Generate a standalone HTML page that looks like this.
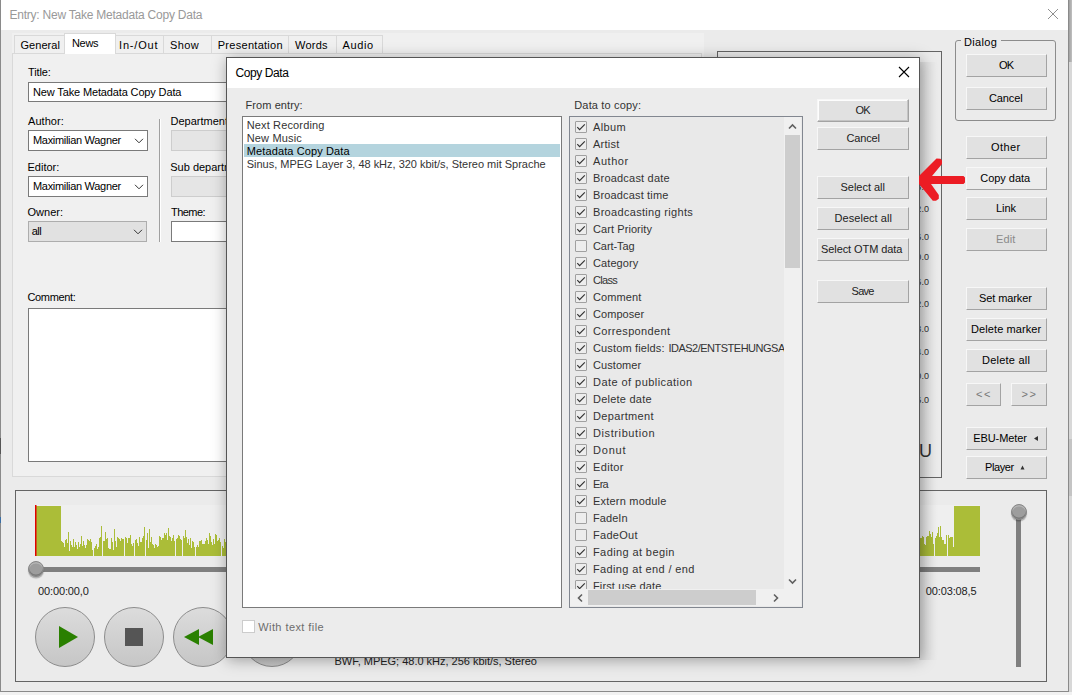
<!DOCTYPE html><html><head><meta charset="utf-8"><style>
html,body{margin:0;padding:0;}
body{width:1072px;height:695px;overflow:hidden;position:relative;background:#f4f4f4;font-family:"Liberation Sans", sans-serif;}
.a{position:absolute;}
.t{position:absolute;white-space:nowrap;line-height:1;font-family:"Liberation Sans", sans-serif;}
</style></head><body>
<div class="a" style="left:1069px;top:0px;width:3px;height:695px;background:#d8d8d8"></div>
<div class="a" style="left:1069px;top:0px;width:3px;height:62px;background:linear-gradient(90deg,#a0a0a0,#c0c0c0)"></div>
<div class="a" style="left:1069px;top:439px;width:3px;height:57px;background:#c4c4c4"></div>
<div class="a" style="left:0px;top:692px;width:1072px;height:3px;background:#f2f2f2"></div>
<div class="a" style="left:0px;top:0px;width:1069px;height:692px;background:#ebebeb;border:1px solid #8a8a8a;border-top:none;box-sizing:border-box"></div>
<div class="a" style="left:1px;top:0px;width:1067px;height:30px;background:#fff"></div>
<div class="a" style="left:0px;top:438px;width:1px;height:16px;background:#555"></div>
<div class="a" style="left:0px;top:517px;width:1px;height:6px;background:#3a6ea5"></div>
<div class="t" style="left:9.50px;top:8.84px;font-size:12px;color:#999;letter-spacing:-0.230px;">Entry: New Take Metadata Copy Data</div>
<svg class="a" style="left:1047px;top:8px" width="12" height="12"><path d="M1 1L11 11M11 1L1 11" stroke="#8f8f8f" stroke-width="1" fill="none"/></svg>
<div class="a" style="left:12px;top:33px;width:692px;height:443px;background:#f0f0f0"></div>
<div class="a" style="left:12px;top:53px;width:690px;height:424px;background:#f0f0f0;border:1px solid #d9d9d9;box-sizing:border-box"></div>
<div class="a" style="left:14px;top:35px;width:51px;height:19px;background:#f0f0f0;border:1px solid #d9d9d9;box-sizing:border-box"></div>
<div class="t" style="left:20.50px;top:39.69px;font-size:11px;color:#000;letter-spacing:0.052px;">General</div>
<div class="a" style="left:64px;top:33px;width:52px;height:21px;background:#fff;border:1px solid #d9d9d9;border-bottom:none;box-sizing:border-box"></div>
<div class="t" style="left:72.00px;top:38.19px;font-size:11px;color:#000;letter-spacing:-0.335px;">News</div>
<div class="a" style="left:115px;top:35px;width:49px;height:19px;background:#f0f0f0;border:1px solid #d9d9d9;box-sizing:border-box"></div>
<div class="t" style="left:119.00px;top:39.69px;font-size:11px;color:#000;letter-spacing:0.822px;">In-/Out</div>
<div class="a" style="left:163px;top:35px;width:49px;height:19px;background:#f0f0f0;border:1px solid #d9d9d9;box-sizing:border-box"></div>
<div class="t" style="left:170.00px;top:39.69px;font-size:11px;color:#000;letter-spacing:0.393px;">Show</div>
<div class="a" style="left:211px;top:35px;width:78px;height:19px;background:#f0f0f0;border:1px solid #d9d9d9;box-sizing:border-box"></div>
<div class="t" style="left:217.75px;top:39.69px;font-size:11px;color:#000;letter-spacing:0.282px;">Presentation</div>
<div class="a" style="left:288px;top:35px;width:49px;height:19px;background:#f0f0f0;border:1px solid #d9d9d9;box-sizing:border-box"></div>
<div class="t" style="left:295.00px;top:39.69px;font-size:11px;color:#000;letter-spacing:0.229px;">Words</div>
<div class="a" style="left:336px;top:35px;width:47px;height:19px;background:#f0f0f0;border:1px solid #d9d9d9;box-sizing:border-box"></div>
<div class="t" style="left:342.50px;top:39.69px;font-size:11px;color:#000;letter-spacing:0.621px;">Audio</div>
<div class="t" style="left:28.00px;top:66.69px;font-size:11px;color:#000;letter-spacing:-0.125px;">Title:</div>
<div class="a" style="left:28px;top:82px;width:400px;height:20px;background:#fff;border:1px solid #7a7a7a;box-sizing:border-box"></div>
<div class="t" style="left:33.00px;top:86.94px;font-size:11px;color:#000;letter-spacing:-0.139px;">New Take Metadata Copy Data</div>
<div class="t" style="left:28.00px;top:115.69px;font-size:11px;color:#000;letter-spacing:0.057px;">Author:</div>
<div class="a" style="left:28px;top:130px;width:120px;height:21px;background:#fff;border:1px solid #7a7a7a;box-sizing:border-box"></div>
<div class="t" style="left:33.00px;top:134.69px;font-size:11px;color:#000;letter-spacing:-0.310px;">Maximilian Wagner</div>
<svg class="a" style="left:134px;top:138px" width="10" height="6"><path d="M1 0.8L5 4.8L9 0.8" stroke="#333" stroke-width="1" fill="none"/></svg>
<div class="t" style="left:27.50px;top:161.69px;font-size:11px;color:#000;letter-spacing:0.002px;">Editor:</div>
<div class="a" style="left:28px;top:176px;width:120px;height:21px;background:#fff;border:1px solid #7a7a7a;box-sizing:border-box"></div>
<div class="t" style="left:33.00px;top:180.69px;font-size:11px;color:#000;letter-spacing:-0.310px;">Maximilian Wagner</div>
<svg class="a" style="left:134px;top:184px" width="10" height="6"><path d="M1 0.8L5 4.8L9 0.8" stroke="#333" stroke-width="1" fill="none"/></svg>
<div class="t" style="left:27.50px;top:206.69px;font-size:11px;color:#000;letter-spacing:0.020px;">Owner:</div>
<div class="a" style="left:28px;top:221px;width:119px;height:21px;background:#e1e1e1;border:1px solid #adadad;box-sizing:border-box"></div>
<div class="t" style="left:31.75px;top:225.69px;font-size:11px;color:#000;letter-spacing:-0.531px;">all</div>
<svg class="a" style="left:133px;top:229px" width="10" height="6"><path d="M1 0.8L5 4.8L9 0.8" stroke="#333" stroke-width="1" fill="none"/></svg>
<div class="a" style="left:159px;top:119px;width:1px;height:123px;background:#a0a0a0"></div>
<div class="a" style="left:160px;top:119px;width:1px;height:123px;background:#fff"></div>
<div class="t" style="left:170.50px;top:115.69px;font-size:11px;color:#000;">Department</div>
<div class="a" style="left:171px;top:130px;width:200px;height:21px;background:#e5e5e5;border:1px solid #cdcdcd;box-sizing:border-box"></div>
<div class="t" style="left:170.25px;top:161.69px;font-size:11px;color:#000;">Sub department</div>
<div class="a" style="left:171px;top:176px;width:200px;height:21px;background:#e5e5e5;border:1px solid #cdcdcd;box-sizing:border-box"></div>
<div class="t" style="left:171.00px;top:206.69px;font-size:11px;color:#000;letter-spacing:-0.547px;">Theme:</div>
<div class="a" style="left:171px;top:221px;width:200px;height:21px;background:#fff;border:1px solid #7a7a7a;box-sizing:border-box"></div>
<div class="t" style="left:27.50px;top:292.29px;font-size:11px;color:#000;letter-spacing:-0.347px;">Comment:</div>
<div class="a" style="left:28px;top:308px;width:400px;height:154px;background:#fff;border:1px solid #7a7a7a;box-sizing:border-box"></div>
<div class="a" style="left:717px;top:51px;width:225px;height:427px;background:#ebebeb;border:1px solid #646464;box-sizing:border-box"></div>
<div class="t" style="left:916.30px;top:182.78px;font-size:9px;color:#333;">8</div>
<div class="t" style="left:921.50px;top:182.78px;font-size:9px;color:#333;">.</div>
<div class="t" style="left:923.90px;top:182.78px;font-size:9px;color:#333;">0</div>
<div class="t" style="left:916.30px;top:205.28px;font-size:9px;color:#333;">2</div>
<div class="t" style="left:921.50px;top:205.28px;font-size:9px;color:#333;">.</div>
<div class="t" style="left:923.90px;top:205.28px;font-size:9px;color:#333;">0</div>
<div class="t" style="left:916.30px;top:233.48px;font-size:9px;color:#333;">6</div>
<div class="t" style="left:921.50px;top:233.48px;font-size:9px;color:#333;">.</div>
<div class="t" style="left:923.90px;top:233.48px;font-size:9px;color:#333;">0</div>
<div class="t" style="left:916.30px;top:252.78px;font-size:9px;color:#333;">0</div>
<div class="t" style="left:921.50px;top:252.78px;font-size:9px;color:#333;">.</div>
<div class="t" style="left:923.90px;top:252.78px;font-size:9px;color:#333;">0</div>
<div class="t" style="left:916.30px;top:277.78px;font-size:9px;color:#333;">6</div>
<div class="t" style="left:921.50px;top:277.78px;font-size:9px;color:#333;">.</div>
<div class="t" style="left:923.90px;top:277.78px;font-size:9px;color:#333;">0</div>
<div class="t" style="left:916.30px;top:300.28px;font-size:9px;color:#333;">2</div>
<div class="t" style="left:921.50px;top:300.28px;font-size:9px;color:#333;">.</div>
<div class="t" style="left:923.90px;top:300.28px;font-size:9px;color:#333;">0</div>
<div class="t" style="left:916.30px;top:324.53px;font-size:9px;color:#333;">8</div>
<div class="t" style="left:921.50px;top:324.53px;font-size:9px;color:#333;">.</div>
<div class="t" style="left:923.90px;top:324.53px;font-size:9px;color:#333;">0</div>
<div class="t" style="left:916.30px;top:348.28px;font-size:9px;color:#333;">4</div>
<div class="t" style="left:921.50px;top:348.28px;font-size:9px;color:#333;">.</div>
<div class="t" style="left:923.90px;top:348.28px;font-size:9px;color:#333;">0</div>
<div class="t" style="left:916.30px;top:372.03px;font-size:9px;color:#333;">0</div>
<div class="t" style="left:921.50px;top:372.03px;font-size:9px;color:#333;">.</div>
<div class="t" style="left:923.90px;top:372.03px;font-size:9px;color:#333;">0</div>
<div class="t" style="left:916.30px;top:395.78px;font-size:9px;color:#333;">6</div>
<div class="t" style="left:921.50px;top:395.78px;font-size:9px;color:#333;">.</div>
<div class="t" style="left:923.90px;top:395.78px;font-size:9px;color:#333;">0</div>
<div class="t" style="left:919.00px;top:441.76px;font-size:18px;color:#333;">U</div>
<div class="a" style="left:955px;top:40px;width:101px;height:81px;border:1px solid #8c8c8c;border-radius:3px;box-sizing:border-box"></div>
<div class="a" style="left:961px;top:34px;width:40px;height:12px;background:#ebebeb"></div>
<div class="t" style="left:964.00px;top:36.94px;font-size:11px;color:#000;letter-spacing:0.337px;">Dialog</div>
<div class="a" style="left:966px;top:54px;width:81px;height:23px;background:#e1e1e1;border-top:1px solid #f7f7f7;border-left:1px solid #f7f7f7;border-bottom:1px solid #a3a3a3;border-right:1px solid #a3a3a3;box-sizing:border-box"></div>
<div class="t" style="left:999.00px;top:60.19px;font-size:11px;color:#000;letter-spacing:-0.700px;">OK</div>
<div class="a" style="left:966px;top:87px;width:81px;height:23px;background:#e1e1e1;border-top:1px solid #f7f7f7;border-left:1px solid #f7f7f7;border-bottom:1px solid #a3a3a3;border-right:1px solid #a3a3a3;box-sizing:border-box"></div>
<div class="t" style="left:989.00px;top:93.19px;font-size:11px;color:#000;letter-spacing:-0.109px;">Cancel</div>
<div class="a" style="left:966px;top:136px;width:81px;height:23px;background:#e1e1e1;border-top:1px solid #f7f7f7;border-left:1px solid #f7f7f7;border-bottom:1px solid #a3a3a3;border-right:1px solid #a3a3a3;box-sizing:border-box"></div>
<div class="t" style="left:991.00px;top:142.19px;font-size:11px;color:#000;letter-spacing:0.413px;">Other</div>
<div class="a" style="left:966px;top:167px;width:81px;height:23px;background:#ececec;border-top:1px solid #f7f7f7;border-left:1px solid #f7f7f7;border-bottom:1px solid #a3a3a3;border-right:1px solid #a3a3a3;box-sizing:border-box"></div>
<div class="t" style="left:980.25px;top:173.19px;font-size:11px;color:#000;letter-spacing:-0.035px;">Copy data</div>
<div class="a" style="left:966px;top:197px;width:81px;height:23px;background:#e1e1e1;border-top:1px solid #f7f7f7;border-left:1px solid #f7f7f7;border-bottom:1px solid #a3a3a3;border-right:1px solid #a3a3a3;box-sizing:border-box"></div>
<div class="t" style="left:996.00px;top:203.19px;font-size:11px;color:#000;letter-spacing:-0.060px;">Link</div>
<div class="a" style="left:966px;top:228px;width:81px;height:23px;background:#e1e1e1;border-top:1px solid #f7f7f7;border-left:1px solid #f7f7f7;border-bottom:1px solid #a3a3a3;border-right:1px solid #a3a3a3;box-sizing:border-box"></div>
<div class="t" style="left:996.00px;top:234.19px;font-size:11px;color:#8a8a8a;letter-spacing:0.117px;">Edit</div>
<div class="a" style="left:966px;top:287px;width:81px;height:23px;background:#e1e1e1;border-top:1px solid #f7f7f7;border-left:1px solid #f7f7f7;border-bottom:1px solid #a3a3a3;border-right:1px solid #a3a3a3;box-sizing:border-box"></div>
<div class="t" style="left:979.00px;top:293.19px;font-size:11px;color:#000;letter-spacing:-0.098px;">Set marker</div>
<div class="a" style="left:966px;top:318px;width:81px;height:23px;background:#e1e1e1;border-top:1px solid #f7f7f7;border-left:1px solid #f7f7f7;border-bottom:1px solid #a3a3a3;border-right:1px solid #a3a3a3;box-sizing:border-box"></div>
<div class="t" style="left:971.00px;top:324.19px;font-size:11px;color:#000;letter-spacing:0.090px;">Delete marker</div>
<div class="a" style="left:966px;top:349px;width:81px;height:23px;background:#e1e1e1;border-top:1px solid #f7f7f7;border-left:1px solid #f7f7f7;border-bottom:1px solid #a3a3a3;border-right:1px solid #a3a3a3;box-sizing:border-box"></div>
<div class="t" style="left:982.00px;top:355.19px;font-size:11px;color:#000;letter-spacing:0.232px;">Delete all</div>
<div class="a" style="left:966px;top:427px;width:81px;height:23px;background:#e1e1e1;border-top:1px solid #f7f7f7;border-left:1px solid #f7f7f7;border-bottom:1px solid #a3a3a3;border-right:1px solid #a3a3a3;box-sizing:border-box"></div>
<div class="t" style="left:973.25px;top:433.19px;font-size:11px;color:#000;letter-spacing:-0.092px;">EBU-Meter</div>
<div class="a" style="left:966px;top:456px;width:81px;height:23px;background:#e1e1e1;border-top:1px solid #f7f7f7;border-left:1px solid #f7f7f7;border-bottom:1px solid #a3a3a3;border-right:1px solid #a3a3a3;box-sizing:border-box"></div>
<div class="t" style="left:985.00px;top:462.19px;font-size:11px;color:#000;letter-spacing:-0.403px;">Player</div>
<svg class="a" style="left:0;top:0" width="1072" height="695"><path d="M1034 438.5L1038 436V441z" fill="#333"/><path d="M1020.5 469.5L1022.5 465.5L1024.5 469.5z" fill="#333"/></svg>
<div class="a" style="left:966px;top:383px;width:35px;height:23px;background:#e1e1e1;border-top:1px solid #f7f7f7;border-left:1px solid #f7f7f7;border-bottom:1px solid #a3a3a3;border-right:1px solid #a3a3a3;box-sizing:border-box"></div>
<div class="t" style="left:976.00px;top:389.19px;font-size:11px;color:#777;letter-spacing:-0.700px;">&lt; &lt;</div>
<div class="a" style="left:1011px;top:383px;width:36px;height:23px;background:#e1e1e1;border-top:1px solid #f7f7f7;border-left:1px solid #f7f7f7;border-bottom:1px solid #a3a3a3;border-right:1px solid #a3a3a3;box-sizing:border-box"></div>
<div class="t" style="left:1021.50px;top:389.19px;font-size:11px;color:#777;letter-spacing:-0.700px;">&gt; &gt;</div>
<div class="a" style="left:15px;top:490px;width:1032px;height:192px;border:1px solid #646464;box-sizing:border-box"></div>
<div class="a" style="left:35px;top:505px;width:945px;height:51px;background:#efefef"></div>
<svg class="a" style="left:0;top:0" width="1072" height="695"><path d="M61 556V541h1V556zM62 556V542h1V556zM63 556V543h1V556zM64 556V547h1V556zM65 556V540h1V556zM66 556V539h1V556zM67 556V543h1V556zM68 556V532h1V556zM69 556V551h1V556zM70 556V541h1V556zM71 556V545h1V556zM72 556V547h1V556zM73 556V539h1V556zM74 556V547h1V556zM75 556V542h1V556zM76 556V545h1V556zM77 556V549h1V556zM78 556V542h1V556zM79 556V547h1V556zM80 556V544h1V556zM81 556V536h1V556zM82 556V546h1V556zM83 556V541h1V556zM84 556V545h1V556zM85 556V548h1V556zM86 556V545h1V556zM87 556V539h1V556zM88 556V540h1V556zM89 556V541h1V556zM90 556V539h1V556zM91 556V542h1V556zM92 556V550h1V556zM94 556V548h1V556zM95 556V546h1V556zM96 556V544h1V556zM97 556V549h1V556zM98 556V547h1V556zM99 556V538h1V556zM100 556V537h1V556zM101 556V526h1V556zM103 556V541h1V556zM104 556V541h1V556zM105 556V532h1V556zM106 556V539h1V556zM107 556V538h1V556zM108 556V548h1V556zM109 556V549h1V556zM110 556V549h1V556zM111 556V538h1V556zM112 556V542h1V556zM113 556V550h1V556zM114 556V529h1V556zM115 556V541h1V556zM116 556V547h1V556zM117 556V537h1V556zM118 556V538h1V556zM119 556V539h1V556zM120 556V541h1V556zM121 556V538h1V556zM122 556V539h1V556zM123 556V539h1V556zM125 556V537h1V556zM126 556V538h1V556zM127 556V543h1V556zM128 556V538h1V556zM129 556V538h1V556zM130 556V535h1V556zM131 556V544h1V556zM132 556V546h1V556zM133 556V543h1V556zM135 556V540h1V556zM136 556V539h1V556zM137 556V543h1V556zM138 556V546h1V556zM139 556V537h1V556zM140 556V542h1V556zM141 556V542h1V556zM142 556V538h1V556zM143 556V536h1V556zM144 556V527h1V556zM146 556V540h1V556zM147 556V533h1V556zM148 556V548h1V556zM149 556V529h1V556zM150 556V542h1V556zM151 556V537h1V556zM152 556V544h1V556zM153 556V545h1V556zM154 556V548h1V556zM155 556V544h1V556zM156 556V545h1V556zM157 556V547h1V556zM158 556V546h1V556zM159 556V536h1V556zM160 556V537h1V556zM161 556V540h1V556zM162 556V538h1V556zM163 556V538h1V556zM164 556V533h1V556zM165 556V535h1V556zM166 556V533h1V556zM167 556V540h1V556zM168 556V528h1V556zM169 556V536h1V556zM170 556V537h1V556zM171 556V541h1V556zM172 556V538h1V556zM173 556V535h1V556zM174 556V541h1V556zM176 556V539h1V556zM177 556V538h1V556zM178 556V535h1V556zM179 556V536h1V556zM180 556V539h1V556zM181 556V540h1V556zM183 556V536h1V556zM184 556V538h1V556zM185 556V530h1V556zM186 556V537h1V556zM187 556V543h1V556zM188 556V539h1V556zM189 556V545h1V556zM190 556V538h1V556zM191 556V548h1V556zM192 556V541h1V556zM193 556V542h1V556zM194 556V547h1V556zM196 556V547h1V556zM197 556V545h1V556zM198 556V547h1V556zM199 556V541h1V556zM200 556V541h1V556zM201 556V540h1V556zM202 556V544h1V556zM203 556V544h1V556zM204 556V544h1V556zM205 556V541h1V556zM206 556V538h1V556zM207 556V540h1V556zM208 556V544h1V556zM209 556V533h1V556zM210 556V536h1V556zM211 556V542h1V556zM212 556V545h1V556zM213 556V539h1V556zM214 556V544h1V556zM215 556V534h1V556zM216 556V535h1V556zM217 556V541h1V556zM218 556V540h1V556zM219 556V538h1V556zM220 556V542h1V556zM222 556V546h1V556zM223 556V548h1V556zM224 556V539h1V556zM225 556V542h1V556zM919 556V536h1V556zM920 556V538h1V556zM921 556V538h1V556zM922 556V536h1V556zM923 556V537h1V556zM924 556V544h1V556zM925 556V545h1V556zM926 556V537h1V556zM927 556V536h1V556zM928 556V536h1V556zM929 556V531h1V556zM930 556V534h1V556zM931 556V537h1V556zM932 556V532h1V556zM933 556V544h1V556zM935 556V538h1V556zM936 556V536h1V556zM937 556V533h1V556zM938 556V527h1V556zM939 556V537h1V556zM940 556V526h1V556zM941 556V537h1V556zM942 556V540h1V556zM943 556V540h1V556zM944 556V544h1V556zM945 556V544h1V556zM946 556V535h1V556zM948 556V535h1V556zM949 556V538h1V556zM950 556V537h1V556zM951 556V537h1V556zM952 556V537h1V556zM953 556V547h1V556z" fill="#abbd38"/><rect x="36" y="506" width="25" height="50" fill="#abbd38"/><rect x="954" y="506" width="26" height="50" fill="#abbd38"/><rect x="35" y="505" width="1.5" height="51" fill="#e00000"/></svg>
<div class="a" style="left:36px;top:567px;width:944px;height:5px;background:#7f7f7f"></div>
<div class="a" style="left:28px;top:560.5px;width:16px;height:16px;border-radius:50%;background:#9d9d9d;border:1px solid #888;box-sizing:border-box;box-shadow:inset 0 -1.5px 0 #7a7a7a, inset 0 1.5px 0 #b5b5b5, 0 1.5px 1px rgba(0,0,0,.25)"></div>
<div class="t" style="left:38.00px;top:586.19px;font-size:11px;color:#222;letter-spacing:-0.125px;">00:00:00,0</div>
<div class="t" style="left:925.75px;top:586.19px;font-size:11px;color:#222;letter-spacing:-0.125px;">00:03:08,5</div>
<div class="a" style="left:1016px;top:512px;width:5px;height:155px;background:#7f7f7f"></div>
<div class="a" style="left:1010.5px;top:504px;width:16px;height:16px;border-radius:50%;background:#9d9d9d;border:1px solid #888;box-sizing:border-box;box-shadow:inset 0 -1.5px 0 #7a7a7a, inset 0 1.5px 0 #b5b5b5, 0 1.5px 1px rgba(0,0,0,.25)"></div>
<div class="a" style="left:34.75px;top:606.5px;width:60px;height:60px;border-radius:50%;background:linear-gradient(#dcdcdc,#c6c6c6);border:1px solid #8c8c8c;box-sizing:border-box"></div>
<div class="a" style="left:104px;top:606.5px;width:60px;height:60px;border-radius:50%;background:linear-gradient(#dcdcdc,#c6c6c6);border:1px solid #8c8c8c;box-sizing:border-box"></div>
<div class="a" style="left:173px;top:606.5px;width:60px;height:60px;border-radius:50%;background:linear-gradient(#dcdcdc,#c6c6c6);border:1px solid #8c8c8c;box-sizing:border-box"></div>
<div class="a" style="left:242px;top:606.5px;width:60px;height:60px;border-radius:50%;background:linear-gradient(#dcdcdc,#c6c6c6);border:1px solid #8c8c8c;box-sizing:border-box"></div>
<svg class="a" style="left:0;top:0" width="1072" height="695"><path d="M59 626L78 637L59 648z" fill="#2a8000"/><rect x="125" y="628" width="18" height="18" fill="#555"/><path d="M184 637L199 629V645z M198 637L213 629V645z" fill="#2a8000"/></svg>
<div class="t" style="left:334.50px;top:655.79px;font-size:11px;color:#222;letter-spacing:-0.014px;">BWF, MPEG; 48.0 kHz, 256 kbit/s, Stereo</div>
<div class="a" style="left:919px;top:62px;width:18px;height:598px;background:linear-gradient(90deg,rgba(0,0,0,.09),rgba(0,0,0,0))"></div>
<div class="a" style="left:226px;top:57px;width:694px;height:601px;background:#ececec;border:1px solid #555;box-sizing:border-box;box-shadow:1px 2px 14px rgba(0,0,0,.34)"></div>
<div class="a" style="left:227px;top:58px;width:692px;height:30px;background:#fff"></div>
<div class="t" style="left:235.50px;top:67.34px;font-size:12px;color:#000;letter-spacing:-0.409px;">Copy Data</div>
<svg class="a" style="left:898px;top:66px" width="12" height="12"><path d="M1 1L11 11M11 1L1 11" stroke="#000" stroke-width="1.1" fill="none"/></svg>
<div class="t" style="left:245.50px;top:99.94px;font-size:11px;color:#333;letter-spacing:0.083px;">From entry:</div>
<div class="a" style="left:242px;top:116px;width:320px;height:492px;background:#fff;border:1px solid #7a7a7a;box-sizing:border-box"></div>
<div class="a" style="left:244px;top:144px;width:316px;height:13px;background:#b4d4de"></div>
<div class="t" style="left:246.75px;top:120.19px;font-size:11px;color:#333;letter-spacing:0.139px;">Next Recording</div>
<div class="t" style="left:246.75px;top:133.19px;font-size:11px;color:#333;letter-spacing:0.152px;">New Music</div>
<div class="t" style="left:246.75px;top:146.19px;font-size:11px;color:#000;letter-spacing:0.116px;">Metadata Copy Data</div>
<div class="t" style="left:246.75px;top:159.19px;font-size:11px;color:#333;letter-spacing:-0.012px;">Sinus, MPEG Layer 3, 48 kHz, 320 kbit/s, Stereo mit Sprache</div>
<div class="t" style="left:574.25px;top:99.69px;font-size:11px;color:#333;letter-spacing:0.166px;">Data to copy:</div>
<div class="a" style="left:569px;top:116px;width:234px;height:492px;background:#e9e9e9;border:1px solid #828790;box-sizing:border-box"></div>
<div class="a" style="left:570px;top:117px;width:214px;height:472px;overflow:hidden">
<div class="a" style="left:5px;top:4px;width:12px;height:12px;border:1px solid #a0a0a0;border-radius:1px;box-sizing:border-box;background:#ededed"></div>
<svg class="a" style="left:5px;top:4px" width="12" height="12"><path d="M2.3 6.2L4.6 8.6L9.8 3.3" stroke="#333" stroke-width="1.2" fill="none"/></svg>
<div class="t" style="left:23.00px;top:5.44px;font-size:11px;color:#333;letter-spacing:0.371px;">Album</div>
<div class="a" style="left:5px;top:21px;width:12px;height:12px;border:1px solid #a0a0a0;border-radius:1px;box-sizing:border-box;background:#ededed"></div>
<svg class="a" style="left:5px;top:21px" width="12" height="12"><path d="M2.3 6.2L4.6 8.6L9.8 3.3" stroke="#333" stroke-width="1.2" fill="none"/></svg>
<div class="t" style="left:23.00px;top:22.44px;font-size:11px;color:#333;letter-spacing:0.250px;">Artist</div>
<div class="a" style="left:5px;top:38px;width:12px;height:12px;border:1px solid #a0a0a0;border-radius:1px;box-sizing:border-box;background:#ededed"></div>
<svg class="a" style="left:5px;top:38px" width="12" height="12"><path d="M2.3 6.2L4.6 8.6L9.8 3.3" stroke="#333" stroke-width="1.2" fill="none"/></svg>
<div class="t" style="left:23.00px;top:39.44px;font-size:11px;color:#333;letter-spacing:0.551px;">Author</div>
<div class="a" style="left:5px;top:55px;width:12px;height:12px;border:1px solid #a0a0a0;border-radius:1px;box-sizing:border-box;background:#ededed"></div>
<svg class="a" style="left:5px;top:55px" width="12" height="12"><path d="M2.3 6.2L4.6 8.6L9.8 3.3" stroke="#333" stroke-width="1.2" fill="none"/></svg>
<div class="t" style="left:23.00px;top:56.44px;font-size:11px;color:#333;letter-spacing:0.202px;">Broadcast date</div>
<div class="a" style="left:5px;top:72px;width:12px;height:12px;border:1px solid #a0a0a0;border-radius:1px;box-sizing:border-box;background:#ededed"></div>
<svg class="a" style="left:5px;top:72px" width="12" height="12"><path d="M2.3 6.2L4.6 8.6L9.8 3.3" stroke="#333" stroke-width="1.2" fill="none"/></svg>
<div class="t" style="left:23.00px;top:73.44px;font-size:11px;color:#333;letter-spacing:0.154px;">Broadcast time</div>
<div class="a" style="left:5px;top:89px;width:12px;height:12px;border:1px solid #a0a0a0;border-radius:1px;box-sizing:border-box;background:#ededed"></div>
<svg class="a" style="left:5px;top:89px" width="12" height="12"><path d="M2.3 6.2L4.6 8.6L9.8 3.3" stroke="#333" stroke-width="1.2" fill="none"/></svg>
<div class="t" style="left:23.00px;top:90.44px;font-size:11px;color:#333;letter-spacing:0.311px;">Broadcasting rights</div>
<div class="a" style="left:5px;top:106px;width:12px;height:12px;border:1px solid #a0a0a0;border-radius:1px;box-sizing:border-box;background:#ededed"></div>
<svg class="a" style="left:5px;top:106px" width="12" height="12"><path d="M2.3 6.2L4.6 8.6L9.8 3.3" stroke="#333" stroke-width="1.2" fill="none"/></svg>
<div class="t" style="left:23.00px;top:107.44px;font-size:11px;color:#333;letter-spacing:0.078px;">Cart Priority</div>
<div class="a" style="left:5px;top:123px;width:12px;height:12px;border:1px solid #a0a0a0;border-radius:1px;box-sizing:border-box;background:#ededed"></div>
<div class="t" style="left:23.00px;top:124.44px;font-size:11px;color:#333;letter-spacing:-0.080px;">Cart-Tag</div>
<div class="a" style="left:5px;top:140px;width:12px;height:12px;border:1px solid #a0a0a0;border-radius:1px;box-sizing:border-box;background:#ededed"></div>
<svg class="a" style="left:5px;top:140px" width="12" height="12"><path d="M2.3 6.2L4.6 8.6L9.8 3.3" stroke="#333" stroke-width="1.2" fill="none"/></svg>
<div class="t" style="left:23.00px;top:141.44px;font-size:11px;color:#333;letter-spacing:0.088px;">Category</div>
<div class="a" style="left:5px;top:157px;width:12px;height:12px;border:1px solid #a0a0a0;border-radius:1px;box-sizing:border-box;background:#ededed"></div>
<svg class="a" style="left:5px;top:157px" width="12" height="12"><path d="M2.3 6.2L4.6 8.6L9.8 3.3" stroke="#333" stroke-width="1.2" fill="none"/></svg>
<div class="t" style="left:23.00px;top:158.44px;font-size:11px;color:#333;letter-spacing:-0.689px;">Class</div>
<div class="a" style="left:5px;top:174px;width:12px;height:12px;border:1px solid #a0a0a0;border-radius:1px;box-sizing:border-box;background:#ededed"></div>
<svg class="a" style="left:5px;top:174px" width="12" height="12"><path d="M2.3 6.2L4.6 8.6L9.8 3.3" stroke="#333" stroke-width="1.2" fill="none"/></svg>
<div class="t" style="left:23.00px;top:175.44px;font-size:11px;color:#333;letter-spacing:0.104px;">Comment</div>
<div class="a" style="left:5px;top:191px;width:12px;height:12px;border:1px solid #a0a0a0;border-radius:1px;box-sizing:border-box;background:#ededed"></div>
<svg class="a" style="left:5px;top:191px" width="12" height="12"><path d="M2.3 6.2L4.6 8.6L9.8 3.3" stroke="#333" stroke-width="1.2" fill="none"/></svg>
<div class="t" style="left:23.00px;top:192.44px;font-size:11px;color:#333;letter-spacing:0.060px;">Composer</div>
<div class="a" style="left:5px;top:208px;width:12px;height:12px;border:1px solid #a0a0a0;border-radius:1px;box-sizing:border-box;background:#ededed"></div>
<svg class="a" style="left:5px;top:208px" width="12" height="12"><path d="M2.3 6.2L4.6 8.6L9.8 3.3" stroke="#333" stroke-width="1.2" fill="none"/></svg>
<div class="t" style="left:23.00px;top:209.44px;font-size:11px;color:#333;letter-spacing:0.357px;">Correspondent</div>
<div class="a" style="left:5px;top:225px;width:12px;height:12px;border:1px solid #a0a0a0;border-radius:1px;box-sizing:border-box;background:#ededed"></div>
<svg class="a" style="left:5px;top:225px" width="12" height="12"><path d="M2.3 6.2L4.6 8.6L9.8 3.3" stroke="#333" stroke-width="1.2" fill="none"/></svg>
<div class="t" style="left:23.00px;top:226.44px;font-size:11px;color:#333;letter-spacing:0.144px;">Custom fields:</div>
<div class="t" style="left:98.40px;top:226.44px;font-size:11px;color:#333;letter-spacing:-0.498px;">IDAS2/ENTSTEHUNGSA</div>
<div class="a" style="left:5px;top:242px;width:12px;height:12px;border:1px solid #a0a0a0;border-radius:1px;box-sizing:border-box;background:#ededed"></div>
<svg class="a" style="left:5px;top:242px" width="12" height="12"><path d="M2.3 6.2L4.6 8.6L9.8 3.3" stroke="#333" stroke-width="1.2" fill="none"/></svg>
<div class="t" style="left:23.00px;top:243.44px;font-size:11px;color:#333;letter-spacing:0.069px;">Customer</div>
<div class="a" style="left:5px;top:259px;width:12px;height:12px;border:1px solid #a0a0a0;border-radius:1px;box-sizing:border-box;background:#ededed"></div>
<svg class="a" style="left:5px;top:259px" width="12" height="12"><path d="M2.3 6.2L4.6 8.6L9.8 3.3" stroke="#333" stroke-width="1.2" fill="none"/></svg>
<div class="t" style="left:23.00px;top:260.44px;font-size:11px;color:#333;letter-spacing:0.445px;">Date of publication</div>
<div class="a" style="left:5px;top:276px;width:12px;height:12px;border:1px solid #a0a0a0;border-radius:1px;box-sizing:border-box;background:#ededed"></div>
<svg class="a" style="left:5px;top:276px" width="12" height="12"><path d="M2.3 6.2L4.6 8.6L9.8 3.3" stroke="#333" stroke-width="1.2" fill="none"/></svg>
<div class="t" style="left:23.00px;top:277.44px;font-size:11px;color:#333;letter-spacing:0.236px;">Delete date</div>
<div class="a" style="left:5px;top:293px;width:12px;height:12px;border:1px solid #a0a0a0;border-radius:1px;box-sizing:border-box;background:#ededed"></div>
<svg class="a" style="left:5px;top:293px" width="12" height="12"><path d="M2.3 6.2L4.6 8.6L9.8 3.3" stroke="#333" stroke-width="1.2" fill="none"/></svg>
<div class="t" style="left:23.00px;top:294.44px;font-size:11px;color:#333;letter-spacing:0.343px;">Department</div>
<div class="a" style="left:5px;top:310px;width:12px;height:12px;border:1px solid #a0a0a0;border-radius:1px;box-sizing:border-box;background:#ededed"></div>
<svg class="a" style="left:5px;top:310px" width="12" height="12"><path d="M2.3 6.2L4.6 8.6L9.8 3.3" stroke="#333" stroke-width="1.2" fill="none"/></svg>
<div class="t" style="left:23.00px;top:311.44px;font-size:11px;color:#333;letter-spacing:0.600px;">Distribution</div>
<div class="a" style="left:5px;top:327px;width:12px;height:12px;border:1px solid #a0a0a0;border-radius:1px;box-sizing:border-box;background:#ededed"></div>
<svg class="a" style="left:5px;top:327px" width="12" height="12"><path d="M2.3 6.2L4.6 8.6L9.8 3.3" stroke="#333" stroke-width="1.2" fill="none"/></svg>
<div class="t" style="left:23.00px;top:328.44px;font-size:11px;color:#333;letter-spacing:0.801px;">Donut</div>
<div class="a" style="left:5px;top:344px;width:12px;height:12px;border:1px solid #a0a0a0;border-radius:1px;box-sizing:border-box;background:#ededed"></div>
<svg class="a" style="left:5px;top:344px" width="12" height="12"><path d="M2.3 6.2L4.6 8.6L9.8 3.3" stroke="#333" stroke-width="1.2" fill="none"/></svg>
<div class="t" style="left:23.00px;top:345.44px;font-size:11px;color:#333;letter-spacing:0.336px;">Editor</div>
<div class="a" style="left:5px;top:361px;width:12px;height:12px;border:1px solid #a0a0a0;border-radius:1px;box-sizing:border-box;background:#ededed"></div>
<svg class="a" style="left:5px;top:361px" width="12" height="12"><path d="M2.3 6.2L4.6 8.6L9.8 3.3" stroke="#333" stroke-width="1.2" fill="none"/></svg>
<div class="t" style="left:23.00px;top:362.44px;font-size:11px;color:#333;letter-spacing:-0.700px;">Era</div>
<div class="a" style="left:5px;top:378px;width:12px;height:12px;border:1px solid #a0a0a0;border-radius:1px;box-sizing:border-box;background:#ededed"></div>
<svg class="a" style="left:5px;top:378px" width="12" height="12"><path d="M2.3 6.2L4.6 8.6L9.8 3.3" stroke="#333" stroke-width="1.2" fill="none"/></svg>
<div class="t" style="left:23.00px;top:379.44px;font-size:11px;color:#333;letter-spacing:0.204px;">Extern module</div>
<div class="a" style="left:5px;top:395px;width:12px;height:12px;border:1px solid #a0a0a0;border-radius:1px;box-sizing:border-box;background:#ededed"></div>
<div class="t" style="left:23.00px;top:396.44px;font-size:11px;color:#333;letter-spacing:0.074px;">FadeIn</div>
<div class="a" style="left:5px;top:412px;width:12px;height:12px;border:1px solid #a0a0a0;border-radius:1px;box-sizing:border-box;background:#ededed"></div>
<div class="t" style="left:23.00px;top:413.44px;font-size:11px;color:#333;letter-spacing:0.292px;">FadeOut</div>
<div class="a" style="left:5px;top:429px;width:12px;height:12px;border:1px solid #a0a0a0;border-radius:1px;box-sizing:border-box;background:#ededed"></div>
<svg class="a" style="left:5px;top:429px" width="12" height="12"><path d="M2.3 6.2L4.6 8.6L9.8 3.3" stroke="#333" stroke-width="1.2" fill="none"/></svg>
<div class="t" style="left:23.00px;top:430.44px;font-size:11px;color:#333;letter-spacing:0.395px;">Fading at begin</div>
<div class="a" style="left:5px;top:446px;width:12px;height:12px;border:1px solid #a0a0a0;border-radius:1px;box-sizing:border-box;background:#ededed"></div>
<svg class="a" style="left:5px;top:446px" width="12" height="12"><path d="M2.3 6.2L4.6 8.6L9.8 3.3" stroke="#333" stroke-width="1.2" fill="none"/></svg>
<div class="t" style="left:23.00px;top:447.44px;font-size:11px;color:#333;letter-spacing:0.365px;">Fading at end / end</div>
<div class="a" style="left:5px;top:463px;width:12px;height:12px;border:1px solid #a0a0a0;border-radius:1px;box-sizing:border-box;background:#ededed"></div>
<svg class="a" style="left:5px;top:463px" width="12" height="12"><path d="M2.3 6.2L4.6 8.6L9.8 3.3" stroke="#333" stroke-width="1.2" fill="none"/></svg>
<div class="t" style="left:23.00px;top:464.44px;font-size:11px;color:#333;letter-spacing:0.133px;">First use date</div>
</div>
<div class="a" style="left:784px;top:117px;width:17px;height:472px;background:#f0f0f0"></div>
<div class="a" style="left:785px;top:135px;width:15px;height:133px;background:#cdcdcd"></div>
<svg class="a" style="left:788px;top:123px" width="9" height="7"><path d="M1 5.5L4.5 2L8 5.5" stroke="#606060" stroke-width="1.6" fill="none"/></svg>
<svg class="a" style="left:788px;top:577.5px" width="9" height="7"><path d="M1 1.5L4.5 5L8 1.5" stroke="#606060" stroke-width="1.6" fill="none"/></svg>
<div class="a" style="left:570px;top:589px;width:231px;height:17px;background:#f0f0f0"></div>
<div class="a" style="left:588px;top:590px;width:168px;height:15px;background:#cdcdcd"></div>
<svg class="a" style="left:575.5px;top:593px" width="8" height="10"><path d="M6 1.5L2.5 5L6 8.5" stroke="#606060" stroke-width="1.6" fill="none"/></svg>
<svg class="a" style="left:771.5px;top:593px" width="8" height="10"><path d="M2 1.5L5.5 5L2 8.5" stroke="#606060" stroke-width="1.6" fill="none"/></svg>
<div class="a" style="left:817px;top:99px;width:92px;height:23px;background:#e1e1e1;border-top:1px solid #f7f7f7;border-left:1px solid #f7f7f7;border-bottom:1px solid #a3a3a3;border-right:1px solid #a3a3a3;box-sizing:border-box"></div>
<div class="t" style="left:855.50px;top:105.19px;font-size:11px;color:#222;letter-spacing:-0.700px;">OK</div>
<div class="a" style="left:817px;top:127px;width:92px;height:23px;background:#e1e1e1;border-top:1px solid #f7f7f7;border-left:1px solid #f7f7f7;border-bottom:1px solid #a3a3a3;border-right:1px solid #a3a3a3;box-sizing:border-box"></div>
<div class="t" style="left:846.50px;top:133.19px;font-size:11px;color:#222;letter-spacing:-0.159px;">Cancel</div>
<div class="a" style="left:817px;top:176px;width:92px;height:23px;background:#e1e1e1;border-top:1px solid #f7f7f7;border-left:1px solid #f7f7f7;border-bottom:1px solid #a3a3a3;border-right:1px solid #a3a3a3;box-sizing:border-box"></div>
<div class="t" style="left:840.50px;top:182.19px;font-size:11px;color:#222;letter-spacing:-0.021px;">Select all</div>
<div class="a" style="left:817px;top:207px;width:92px;height:23px;background:#e1e1e1;border-top:1px solid #f7f7f7;border-left:1px solid #f7f7f7;border-bottom:1px solid #a3a3a3;border-right:1px solid #a3a3a3;box-sizing:border-box"></div>
<div class="t" style="left:834.50px;top:213.19px;font-size:11px;color:#222;letter-spacing:0.053px;">Deselect all</div>
<div class="a" style="left:817px;top:238px;width:92px;height:23px;background:#e1e1e1;border-top:1px solid #f7f7f7;border-left:1px solid #f7f7f7;border-bottom:1px solid #a3a3a3;border-right:1px solid #a3a3a3;box-sizing:border-box"></div>
<div class="t" style="left:821.00px;top:244.19px;font-size:11px;color:#222;letter-spacing:-0.083px;">Select OTM data</div>
<div class="a" style="left:817px;top:280px;width:92px;height:23px;background:#e1e1e1;border-top:1px solid #f7f7f7;border-left:1px solid #f7f7f7;border-bottom:1px solid #a3a3a3;border-right:1px solid #a3a3a3;box-sizing:border-box"></div>
<div class="t" style="left:851.50px;top:286.19px;font-size:11px;color:#222;letter-spacing:-0.700px;">Save</div>
<div class="a" style="left:818px;top:100px;width:90px;height:21px;box-shadow:inset -1px -1px 0 #c4c4c4, inset 1px 1px 0 #fdfdfd"></div>
<div class="a" style="left:242px;top:620px;width:13px;height:13px;background:#fff;border:1px solid #cccccc;box-sizing:border-box"></div>
<div class="t" style="left:258.20px;top:621.99px;font-size:11px;color:#6d6d6d;letter-spacing:0.432px;">With text file</div>
<svg class="a" style="left:0;top:0" width="1072" height="695"><path d="M919 176L936.5 158.5L940.5 158.8L942 160.5L942 164L932 176L963.5 176L965 177.5L965 182.5L963.5 184L931 184L938.8 195L938.8 198.8L936 200.8L932.8 200.8L919 184z" fill="#ec1c24"/></svg>
</body></html>
